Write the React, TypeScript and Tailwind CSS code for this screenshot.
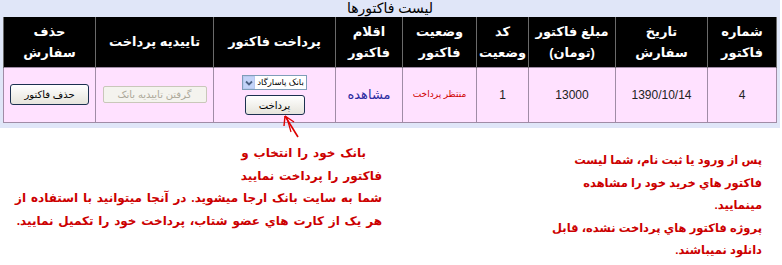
import React from "react";

const font = { fontFamily: '"Liberation Sans", "DejaVu Sans", sans-serif' };

const cols = [
  { w: 69, h: ["شماره", "فاکتور"] },
  { w: 92, h: ["تاریخ", "سفارش"] },
  { w: 87, h: ["مبلغ فاکتور", "(تومان)"] },
  { w: 52, h: ["کد", "وضعیت"] },
  { w: 74, h: ["وضعیت", "فاکتور"] },
  { w: 67, h: ["اقلام", "فاکتور"] },
  { w: 122, h: ["پرداخت فاکتور"] },
  { w: 118, h: ["تاییدیه پرداخت"] },
  { w: 92, h: ["حذف", "سفارش"] },
];

export default function App() {
  return (
    <div className="relative w-[782px] h-[265px] bg-white overflow-hidden" style={font}>
      <div className="bg-[#e0e6f8] w-[780px] h-[128px] pt-[1px]">
        <div dir="rtl" className="h-[16px] text-center text-[14px] leading-[14px] text-black">
          لیست فاکتورها
        </div>
        <table dir="rtl" className="ml-[3px] w-[773px] border-collapse table-fixed">
          <colgroup>
            {cols.map((c, i) => (
              <col key={i} style={{ width: c.w }} />
            ))}
          </colgroup>
          <thead>
            <tr className="h-[50px] bg-black">
              {cols.map((c, i) => (
                <th
                  key={i}
                  className="border-x border-[#6a6a6a] text-white font-bold text-[13px] leading-[21px] text-center align-middle p-0"
                >
                  {c.h.map((l, j) => (
                    <div key={j}>{l}</div>
                  ))}
                </th>
              ))}
            </tr>
          </thead>
          <tbody>
            <tr className="h-[55px] bg-[#ffe1ff] text-[12px] text-[#222]">
              <td className="border border-[#a08ca6] text-center">4</td>
              <td className="border border-[#a08ca6] text-center">1390/10/14</td>
              <td className="border border-[#a08ca6] text-center">13000</td>
              <td className="border border-[#a08ca6] text-center">1</td>
              <td className="border border-[#a08ca6] text-center text-[9px] text-[#d00000]">منتظر پرداخت</td>
              <td className="border border-[#a08ca6] text-center text-[13px] text-[#2a2aa0]">مشاهده</td>
              <td className="border border-[#a08ca6] p-0">
                <div className="flex flex-col items-center gap-[5px] pt-[1px]">
                  <div className="flex h-[15px] items-stretch border border-[#7f9db9] bg-white" dir="ltr">
                    <div className="flex w-[12px] shrink-0 items-center justify-center bg-[#c3d3f8] border border-[#b8c8ef]">
                      <svg width="8" height="6" viewBox="0 0 8 6">
                        <path d="M1 1.5 L4 4.5 L7 1.5" stroke="#4d6185" strokeWidth="1.8" fill="none" />
                      </svg>
                    </div>
                    <div className="whitespace-nowrap text-right text-[8.5px] leading-[13px] px-[2px] text-black" dir="rtl">
                      بانک پاسارگاد
                    </div>
                  </div>
                  <div className="flex h-[20px] w-[60px] items-center justify-center rounded-[3px] border border-[#1c3050] bg-gradient-to-b from-white to-[#e6e4dc] text-[10px] text-black">
                    پرداخت
                  </div>
                </div>
              </td>
              <td className="border border-[#a08ca6] p-0">
                <div className="flex justify-center">
                  <div className="flex h-[17px] w-[104px] items-center justify-center rounded-[2px] border border-[#c9c7ba] bg-[#f4f3ee] text-[10px] text-[#aca899]">
                    گرفتن تاییدیه بانک
                  </div>
                </div>
              </td>
              <td className="border border-[#a08ca6] p-0">
                <div className="flex justify-center">
                  <div className="flex h-[21px] w-[79px] items-center justify-center rounded-[3px] border border-[#1c3050] bg-gradient-to-b from-white to-[#e6e4dc] text-[10px] text-black">
                    حذف فاکتور
                  </div>
                </div>
              </td>
            </tr>
          </tbody>
        </table>
      </div>

      <div className="flex justify-between text-[#cc0000] font-bold leading-[22.5px]">
        <div dir="rtl" className="w-[378px] ml-[4px] mt-[14px] text-right text-[12px] [word-spacing:1.5px]">
          <div className="pr-[16px]">بانک خود را انتخاب و</div>
          <div>فاکتور را پرداخت نمایید</div>
          <div>شما به سایت بانک ارجا میشوید. در آنجا میتوانید با استفاده از</div>
          <div>هر یک از کارت هاي عضو شتاب، پرداخت خود را تکمیل نمایید.</div>
        </div>
        <div dir="rtl" className="w-[240px] mr-[20px] mt-[21px] text-right text-[11.5px]">
          <div>پس از ورود یا ثبت نام، شما لیست</div>
          <div>فاکتور هاي خرید خود را مشاهده</div>
          <div>مینمایید.</div>
          <div>پروژه فاکتور هاي پرداخت نشده، قابل</div>
          <div>دانلود نمیباشند.</div>
        </div>
      </div>

      <svg className="absolute left-[280px] top-[112px]" width="26" height="30" viewBox="0 0 26 30">
        <path d="M5 4 L18 25" stroke="#dd0000" strokeWidth="1.6" fill="none" />
        <path d="M5 4 L4 14" stroke="#dd0000" strokeWidth="1.4" fill="none" />
        <path d="M5 4 L14 10" stroke="#dd0000" strokeWidth="1.4" fill="none" />
        <path d="M7 6 L11 20" stroke="#dd0000" strokeWidth="1.2" fill="none" />
      </svg>
    </div>
  );
}
